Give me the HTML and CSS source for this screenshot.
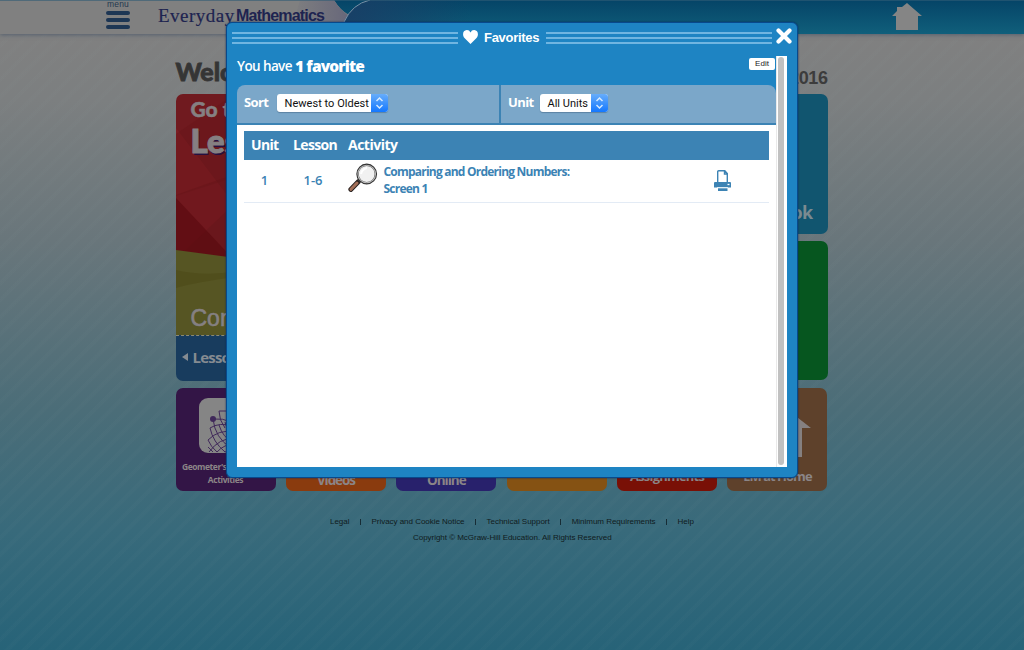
FILE: index.html
```html
<!DOCTYPE html>
<html lang="en">
<head>
<meta charset="utf-8">
<title>Everyday Mathematics - Favorites</title>
<link rel="stylesheet" href="styles.css">
</head>
<body>
<header class="topbar">
  <svg class="swoosh" width="1024" height="34" viewBox="0 0 1024 34">
    <defs>
      <linearGradient id="bar" x1="0" y1="0" x2="0" y2="1"><stop offset="0" stop-color="#054467"/><stop offset="1" stop-color="#105f7b"/></linearGradient>
      <linearGradient id="fold" x1="0" y1="0" x2="1" y2="0"><stop offset="0" stop-color="#808080"/><stop offset="1" stop-color="#67677a"/></linearGradient>
      <linearGradient id="curve" x1="0" y1="0" x2="1" y2="0"><stop offset="0" stop-color="#193f66"/><stop offset="1" stop-color="#193f66" stop-opacity="0"/></linearGradient>
    </defs>
    <rect x="330" width="694" height="34" fill="url(#bar)"/>
    <path d="M0 0H334Q340 10 349 15L338 34H0Z" fill="#808080"/>
    <path d="M300 0H334Q340 10 349 16L338 34H290Z" fill="url(#fold)"/>
    <path d="M344 22Q352 4 370 0H470V34H340Z" fill="url(#curve)"/>
    <path d="M344 22Q352 4 370 0" fill="none" stroke="#7690a5"/>
    <path d="M0 .5H1024" stroke="#315d76" opacity=".6"/>
  </svg>
  <div class="menu"><span>menu</span><i></i><i></i><i></i></div>
  <div class="logo"><span class="logo-serif">Everyday</span><span class="logo-sans">Mathematics</span></div>
  <svg class="home" width="30" height="30" viewBox="0 0 30 30"><path d="M15 1L30 14H26V28H4V14H0L5 9V5H10Z" fill="#858585"/></svg>
</header>
<main class="page">
  <div class="heading"><h1>Welcome</h1><span>2016</span></div>
  <div class="top-cards">
    <section class="lesson">
      <svg class="lesson-art" width="320" height="241" viewBox="0 0 320 241">
        <rect width="320" height="242" fill="#701a1f"/>
        <path d="M0 34L58 110L0 165Z" fill="#7c1d23"/>
        <path d="M0 102L320 0V-1H60L0 40Z" fill="#641318" opacity=".35"/>
        <path d="M0 101Q35 88 60 80V170H0Z" fill="#641318" opacity=".45"/>
        <path d="M0 104L75 184H0Z" fill="#58090d" opacity=".6"/>
        <path d="M0 156L60 164V242H0Z" fill="#565523"/>
        <path d="M0 176Q30 183 60 177V183Q20 188 0 194Z" fill="#4c4a18" opacity=".6"/>
      </svg>
      <div class="lesson-text"><span class="go">Go to</span><span class="les">Lesson</span><span class="con">Connect</span></div>
      <div class="lesson-nav"><i></i>Lessons</div>
    </section>
    <div class="side-cards"><section class="book">eBook</section><section class="green"></section></div>
  </div>
  <div class="tiles">
    <section class="tile purple">
      <svg width="54" height="55" viewBox="0 0 54 55"><rect width="54" height="55" rx="9" fill="#858585"/><g fill="none" stroke="#40295a" stroke-width="1"><path d="M14 21Q24 20 32 24M20 13H34M20 13Q20 22 26 30M11 30Q20 24 34 28M11 30Q14 44 26 54M14 21Q16 40 32 50M20 27Q24 40 34 44M9 42Q20 31 34 34M9 42Q12 49 18 54M10 54Q20 40 36 40M18 54Q25 46 36 46M9 49L14 54M26 54L36 50M26 24Q28 34 36 38"/></g><circle cx="14" cy="21" r="3" fill="#40295a"/></svg>
      <span>Geometer's Sketchpad<br>Activities</span>
    </section>
    <section class="tile orange"><b>Videos</b></section>
    <section class="tile indigo"><b>Online</b></section>
    <section class="tile amber"></section>
    <section class="tile red"><b>Assignments</b></section>
    <section class="tile brown">
      <svg width="36" height="43" viewBox="0 0 36 43"><path d="M18 0L36 14H27V43H9V14H0Z" fill="#858080"/></svg>
      <b>EM at Home</b>
    </section>
  </div>
  <footer>
    <nav><a>Legal</a><i></i><a>Privacy and Cookie Notice</a><i></i><a>Technical Support</a><i></i><a>Minimum Requirements</a><i></i><a>Help</a></nav>
    <p>Copyright © McGraw-Hill Education. All Rights Reserved</p>
  </footer>
</main>

<div class="modal">
  <div class="modal-head">
    <div class="rules"><i></i><i></i><i></i></div>
    <svg class="heart" width="15" height="14" viewBox="0 0 15 14"><path d="M7.5 14L1.5 8C-1 5-.2 .3 3.8 .1Q6.3 0 7.5 2.4Q8.7 0 11.2 .1C15.2 .3 16 5 13.5 8Z" fill="#fff"/></svg>
    <span class="modal-title">Favorites</span>
    <div class="rules"><i></i><i></i><i></i></div>
    <svg class="close" width="16" height="16" viewBox="0 0 16 16"><path d="M2.5 2.5L13.5 13.5M13.5 2.5L2.5 13.5" stroke="#fff" stroke-width="4.2" stroke-linecap="round"/></svg>
  </div>
  <div class="modal-body">
    <div class="content">
      <div class="count"><p><span>You have</span><b>1 favorite</b></p><button class="edit">Edit</button></div>
      <div class="filters">
        <div class="filter sort"><label>Sort</label><div class="select"><span>Newest to Oldest</span><svg width="17" height="18" viewBox="0 0 17 18"><path d="M5.5 7L8.5 4L11.5 7M5.5 11L8.5 14L11.5 11" fill="none" stroke="#d5eaff" stroke-width="1.5"/></svg></div></div>
        <div class="filter unit"><label>Unit</label><div class="select"><span>All Units</span><svg width="17" height="18" viewBox="0 0 17 18"><path d="M5.5 7L8.5 4L11.5 7M5.5 11L8.5 14L11.5 11" fill="none" stroke="#d5eaff" stroke-width="1.5"/></svg></div></div>
      </div>
      <div class="panel">
        <div class="row thead"><span class="c-unit">Unit</span><span class="c-lesson">Lesson</span><span class="c-act">Activity</span></div>
        <div class="row item">
          <span class="c-unit">1</span><span class="c-lesson">1-6</span>
          <svg class="magnifier" width="30" height="30" viewBox="0 0 30 30">
            <path d="M10.5 18.5L2.8 26.5" stroke="#28211f" stroke-width="4.8" stroke-linecap="round"/>
            <path d="M9 20L3 26.3" stroke="#a36f58" stroke-width="3" stroke-linecap="round"/>
            <path d="M11 18L13 16" stroke="#555" stroke-width="3"/>
            <circle cx="18.7" cy="11" r="9.2" fill="#f1f1f1" stroke="#333" stroke-width="2.4"/>
            <circle cx="18.7" cy="11" r="8.8" fill="none" stroke="#bbb" stroke-width="1.1"/>
            <path d="M13 11Q14 6 19 5" fill="none" stroke="#fff" stroke-width="2"/>
          </svg>
          <span class="activity">Comparing and Ordering Numbers:<br>Screen 1</span>
          <svg class="printer" width="17" height="22" viewBox="0 0 17 22"><path d="M3.7 12V1.8Q3.7.8 4.7.8H10.8L13.3 3.5V12M10.5 1V4H13" fill="none" stroke="#3c83b4" stroke-width="1.4"/><path d="M1 12H16Q17 12 17 13V17.5H0V13Q0 12 1 12ZM4 18.2H13.5V21H4Z" fill="#3c83b4"/><path d="M3 17.6H14" stroke="#fff" stroke-width=".8"/><path d="M13.5 14.5H15.5" stroke="#fff" stroke-width="1.3"/></svg>
        </div>
      </div>
    </div>
    <div class="scroll"><i></i></div>
  </div>
</div>
</body>
</html>
```

FILE: styles.css
```css
* { box-sizing: border-box; }
body {
  margin: 0; width: 1024px; height: 650px; overflow: hidden; position: relative;
  font-family: "Liberation Sans", Arial, sans-serif;
  background:
    repeating-linear-gradient(135deg, transparent 0 6px, rgba(150,170,170,.03) 7px 10px, transparent 11px 12px),
    linear-gradient(#808080 34px, #7c7f80 100px, #69767b 240px, #4b6d78 410px, #386a7b 530px, #276378 650px);
}
h1, p { margin: 0; }
.topbar { height: 34px; position: relative; display: flex; align-items: flex-start; box-shadow: 0 1px 4px rgba(50,70,95,.55); }
.swoosh { position: absolute; left: 0; top: 0; }
.menu { position: relative; margin-left: 106px; width: 24px; display: flex; flex-direction: column; gap: 3px; }
.menu span { height: 8px; line-height: 8px; font-size: 8.5px; letter-spacing: .2px; color: #24384f; text-align: center; }
.menu i { height: 4px; border-radius: 2px; background: #1d3654; }
.logo { position: relative; margin-left: 28px; height: 34px; line-height: 32px; display: flex; color: #1e2450; white-space: nowrap; }
.logo-serif { font-family: "Liberation Serif", serif; font-size: 19px; width: 78px; letter-spacing: .5px; -webkit-text-stroke: .2px; }
.logo-sans { font-weight: bold; font-size: 16px; letter-spacing: -.8px; }
.home { position: relative; margin: 2px 102px 0 auto; }

.page { width: 652px; margin-left: 175.5px; }
.heading { height: 60px; padding-top: 23px; display: flex; justify-content: space-between; color: #353535; }
.heading h1 { font: 900 25px/28px Lato, sans-serif; -webkit-text-stroke: .8px #353535; }
.heading span { font-size: 18px; font-weight: bold; line-height: 42px; color: #3c3c3c; letter-spacing: -.4px; }
.top-cards { display: grid; grid-template-columns: 320px 200px; justify-content: space-between; height: 287px; }
.lesson { position: relative; display: flex; flex-direction: column; border-radius: 7px; overflow: hidden; }
.lesson-art { display: block; flex: none; }
.lesson-text { position: absolute; left: 15px; top: 2px; display: flex; flex-direction: column; color: #858082; white-space: nowrap; }
.go { font: 900 21px/26px Lato, sans-serif; -webkit-text-stroke: .5px; }
.les { font: 900 33px/36px Lato, sans-serif; text-shadow: 1px 2px #261040; -webkit-text-stroke: 1px; }
.con { margin-top: 145px; font-size: 23px; line-height: 30px; -webkit-text-stroke: .6px; }
.lesson-nav { flex: 1; border-top: 1px dashed #8b8a75; background: #183c5e; color: #858b91; font: bold 15px/40px "Open Sans", sans-serif; letter-spacing: -.8px; display: flex; align-items: center; gap: 5px; padding: 0 0 4px 6px; }
.lesson-nav i { border: 4px solid transparent; border-right: 6px solid #858b91; border-left: 0; }
.side-cards { display: flex; flex-direction: column; gap: 7px; }
.side-cards section { height: 139.5px; border-radius: 7px; }
.book { background: #11556f; color: #7b8a90; font: bold 18px/25px "Open Sans", sans-serif; display: flex; align-items: flex-end; justify-content: flex-end; padding: 0 15px 9px 0; letter-spacing: -.7px; }
.green { background: #06561f; }
.tiles { margin-top: 7px; display: flex; justify-content: space-between; }
.tile { width: 100px; height: 103px; border-radius: 7px; color: #8b8587; display: flex; flex-direction: column; align-items: center; justify-content: flex-end; white-space: nowrap; }
.tile b { font: bold 15px/20px "Open Sans", sans-serif; letter-spacing: -.5px; }
.purple { background: #331546; }
.purple svg { margin: 0 0 8px 1px; flex: none; }
.purple span { font: bold 8.5px/12.5px "Open Sans", sans-serif; letter-spacing: -.42px; text-align: center; height: 30px; }
.orange { background: #8a3b0e; } .indigo { background: #28216c; } .amber { background: #855213; }
.red { background: #791006; } .brown { background: #5e412b; }
.red b { font-size: 13px; padding-bottom: 5px; letter-spacing: -.8px; }
.brown svg { margin: 0 0 9px 32px; flex: none; }
.brown b { font-size: 13px; padding-bottom: 5px; line-height: 20px; letter-spacing: -1px; }
.orange b, .indigo b { font-size: 13.5px; padding-bottom: 1px; }
.indigo b { letter-spacing: -1px; }
.orange b { letter-spacing: -1.1px; }
footer { margin-top: 23px; font-size: 8px; line-height: 16px; color: #101b20; }
footer nav { display: flex; align-items: center; justify-content: space-between; width: 364px; margin-left: 154.5px; white-space: nowrap; letter-spacing: -.03px; }
footer i { width: 1px; height: 6px; background: #172c35; }
footer p { width: 198px; margin-left: 237.5px; white-space: nowrap; letter-spacing: -.03px; }

.modal { position: absolute; left: 226px; top: 22px; width: 572px; height: 456px; border: 1px solid #08498c; border-radius: 6px; background: #1e84c3; color: #fff; box-shadow: 0 0 2px #092b57; display: flex; flex-direction: column; }
.modal-head { height: 33px; padding: 5px 5px 0; display: flex; align-items: flex-start; }
.rules { width: 226px; margin-top: 4px; display: flex; flex-direction: column; gap: 3.5px; }
.rules i { height: 1.7px; background: #70b5e1; }
.heart { margin: 2px 6px 0 5px; }
.modal-title { width: 62px; font-size: 13px; font-weight: bold; line-height: 20px; letter-spacing: -.3px; }
.close { margin-left: 4px; flex: none; }
.modal-body { height: 411px; margin: 0 10px; display: flex; }
.content { width: 539px; }
.count { height: 29px; display: flex; justify-content: space-between; align-items: flex-start; font-family: "Open Sans", sans-serif; }
.count p { display: flex; gap: 3px; font-size: 13.5px; line-height: 21px; white-space: nowrap; }
.count span { font-weight: 600; letter-spacing: -.6px; }
.count b { font-size: 15.5px; font-weight: 800; letter-spacing: -.85px; }
.edit { width: 26px; height: 12px; margin: 2px 1px 0 0; padding: 0; border: 0; border-radius: 2px; background: #fff; color: #222; font: 8px/12px "Liberation Sans", sans-serif; }
.filters { height: 40px; display: flex; background: #7ba7c9; border-bottom: 2px solid #3c83b4; border-radius: 8px 8px 0 0; }
.filter { display: flex; align-items: flex-start; padding: 9px 0 0 7px; }
.filter label { font: bold 13px/17px "Open Sans", sans-serif; letter-spacing: -.6px; }
.sort { width: 264px; border-right: 2px solid #3c83b4; }
.sort label { width: 33px; }
.unit label { width: 32px; }
.select { height: 18px; border-radius: 3px; background: #fff; color: #111; display: flex; overflow: hidden; font: 11px/19px Roboto, Inter, sans-serif; box-shadow: 0 1px 1px #5c83a3; }
.select span { padding-left: 7.5px; width: 94px; letter-spacing: .04px; white-space: nowrap; }
.unit .select span { width: 51px; letter-spacing: 0; }
.select svg { background: linear-gradient(#67adfa, #1478ff); }
.panel { height: 342px; background: #fff; padding: 6px 7px 0; }
.row { width: 525px; display: flex; font-family: "Open Sans", sans-serif; font-weight: bold; }
.thead { height: 29px; background: #3c83b4; font-size: 14px; line-height: 28px; letter-spacing: -.65px; padding-left: 7px; }
.thead .c-unit { width: 42px; }
.thead .c-lesson { width: 55px; }
.thead .c-act { letter-spacing: -.5px; }
.item { height: 43px; border-bottom: 1px solid #e3ebf5; color: #3c83b4; line-height: 41px; font-size: 13px; font-weight: 600; }
.item .c-unit { width: 41px; text-align: center; }
.item .c-lesson { width: 56px; text-align: center; }
.magnifier { margin: 3px 0 0 7px; flex: none; }
.activity { margin: 4px 0 0 5.5px; width: 330.5px; font-size: 12px; line-height: 16.5px; font-weight: bold; letter-spacing: -.78px; }
.printer { margin-top: 10px; flex: none; }
.scroll { width: 11px; height: 411px; background: #fff; display: flex; padding: 1px 2px 2px; box-shadow: inset 1px 0 #e9e9e9; }
.scroll i { width: 6px; border-radius: 3px; background: #c1c1c1; }
```
